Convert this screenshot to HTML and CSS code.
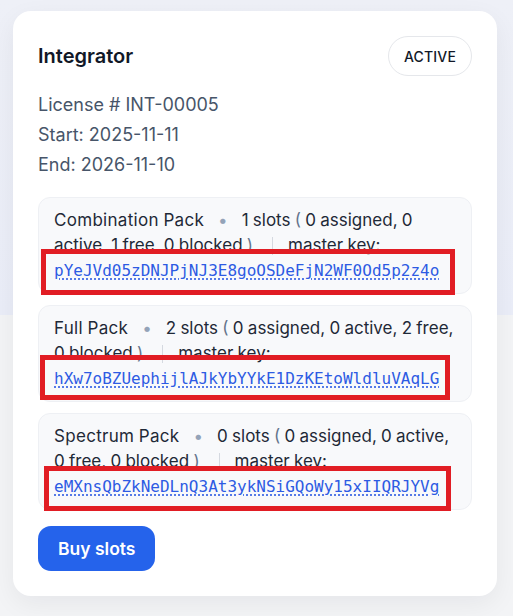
FILE: index.html
```html
<!DOCTYPE html>
<html lang="en">
<head>
<meta charset="utf-8">
<title>Integrator license</title>
<link rel="stylesheet" href="styles.css">
</head>
<body>
<main class="page">
  <section class="card">
    <header class="card-head">
      <h2 class="title">Integrator</h2>
      <span class="status">ACTIVE</span>
    </header>
    <div class="meta">
      <p>License # INT-00005</p>
      <p>Start: 2025-11-11</p>
      <p>End: 2026-11-10</p>
    </div>
    <ul class="packs">
      <li class="pack">
        <span class="pack-name">Combination Pack</span><span class="dot">•</span><span class="slots">1 slots <span class="paren">(</span> 0 assigned, 0 active, 1 free, 0 blocked <span class="paren">)</span></span><span class="sep"></span><span class="mk">master key:</span>
        <a class="key" href="#">pYeJVd05zDNJPjNJ3E8goOSDeFjN2WF0Od5p2z4o</a>
        <span class="hl hl-1"></span>
      </li>
      <li class="pack">
        <span class="pack-name">Full Pack</span><span class="dot">•</span><span class="slots">2 slots <span class="paren">(</span> 0 assigned, 0 active, 2 free, 0 blocked <span class="paren">)</span></span><span class="sep"></span><span class="mk">master key:</span>
        <a class="key" href="#">hXw7oBZUephijlAJkYbYYkE1DzKEtoWldluVAqLG</a>
        <span class="hl hl-2"></span>
      </li>
      <li class="pack">
        <span class="pack-name">Spectrum Pack</span><span class="dot">•</span><span class="slots">0 slots <span class="paren">(</span> 0 assigned, 0 active, 0 free, 0 blocked <span class="paren">)</span></span><span class="sep"></span><span class="mk">master key:</span>
        <a class="key" href="#">eMXnsQbZkNeDLnQ3At3ykNSiGQoWy15xIIQRJYVg</a>
        <span class="hl hl-3"></span>
      </li>
    </ul>
    <button class="btn" type="button">Buy slots</button>
  </section>
</main>
</body>
</html>
```
FILE: styles.css
```css
html, body {
  margin: 0;
  padding: 0;
}
body {
  font-family: Inter, "Noto Sans", sans-serif;
  min-height: 616px;
  background: linear-gradient(to bottom, #eef0f7 0, #eaedf8 315px, #f3f4f6 315px, #f3f4f6 100%);
}
.page {
  padding: 11px 16px 20px 13px;
}
.card {
  background: #fff;
  border-radius: 18px;
  padding: 25px;
  box-shadow: 0 8px 26px rgba(15, 23, 42, 0.06);
}
.card-head {
  display: flex;
  justify-content: space-between;
  align-items: center;
}
.title {
  margin: 0;
  font-size: 20px;
  font-weight: 600;
  color: #111827;
}
.status {
  box-sizing: border-box;
  height: 40px;
  width: 84px;
  border: 1px solid #e5e7eb;
  border-radius: 20px;
  display: flex;
  align-items: center;
  justify-content: center;
  font-size: 14px;
  font-weight: 500;
  letter-spacing: 0.2px;
  color: #111827;
}
.meta {
  margin-top: 14px;
  color: #475569;
  font-size: 18px;
  line-height: 30px;
}
.meta p {
  margin: 0;
}
.packs {
  list-style: none;
  margin: 17px 0 0;
  padding: 0;
  display: flex;
  flex-direction: column;
  gap: 11px;
}
.pack {
  position: relative;
  background: #f8f9fb;
  border: 1px solid #eef0f4;
  border-radius: 12px;
  padding: 10px 15px;
  font-size: 17px;
  line-height: 25px;
  word-spacing: -0.5px;
  color: #1f2937;
}
.pack-name {
  letter-spacing: 0.3px;
}
.dot {
  color: #94a3b8;
  margin: 0 14px;
}
.paren {
  color: #64748b;
}
.sep {
  display: inline-block;
  width: 1px;
  height: 18px;
  background: #d5d9e0;
  vertical-align: middle;
  margin: 0 15px 0 19px;
}
.key {
  font-family: "DejaVu Sans Mono", monospace;
  font-size: 16px;
  letter-spacing: 0;
  word-spacing: 0;
  color: #2d5be3;
  text-decoration: underline dotted;
  text-underline-offset: 3px;
}
.hl {
  position: absolute;
  box-sizing: border-box;
  border: 5px solid #e11d24;
}
.hl-1 {
  left: 2px;
  top: 51px;
  width: 414px;
  height: 46px;
}
.hl-2 {
  left: 1px;
  top: 49px;
  width: 410px;
  height: 45px;
}
.hl-3 {
  left: 5px;
  top: 52px;
  width: 407px;
  height: 45px;
}
.btn {
  display: block;
  margin-top: 16px;
  height: 45px;
  padding: 0 20px;
  border: 0;
  border-radius: 13px;
  background: #2563eb;
  color: #fff;
  font-family: Inter, "Noto Sans", sans-serif;
  font-size: 17.5px;
  font-weight: 600;
}
```
